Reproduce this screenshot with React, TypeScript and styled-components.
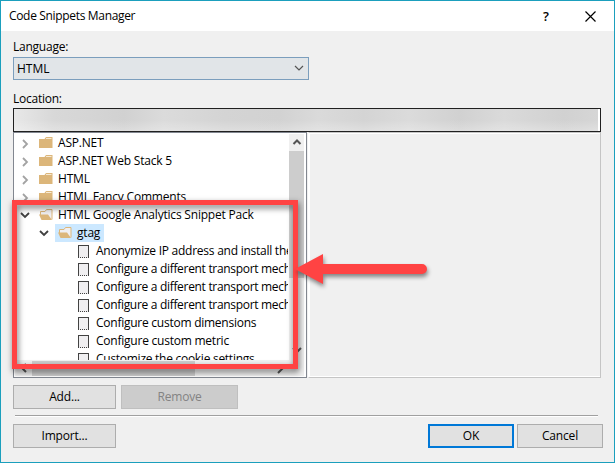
import React from 'react';
import styled, { createGlobalStyle } from 'styled-components';

const Global = createGlobalStyle`
  * { box-sizing: border-box; }
  body { margin: 0; overflow: hidden; }
`;

const Dialog = styled.main`
  position: relative;
  width: 615px;
  height: 463px;
  border: 1px solid #1b9fbd;
  background: #f0f0f0;
  color: #000;
  font: 12px/18px 'Open Sans', 'Noto Sans', sans-serif;
  letter-spacing: -0.2px;
  white-space: nowrap;
`;

const TitleBar = styled.header`
  display: flex;
  align-items: center;
  height: 30px;
  padding: 0 18px 0 8px;
  background: #fff;
`;

const Title = styled.h1`
  flex: 1;
  margin: 0;
  font: inherit;
  letter-spacing: -0.33px;
`;

const HelpMark = styled.span`
  width: 8px;
  margin-right: 34px;
  font-size: 13px;
  font-weight: 600;
`;

const Body = styled.div`
  padding: 7px 13px 0 12px;
`;

const Label = styled.label`
  display: block;
  height: 19px;
  line-height: 18px;
  letter-spacing: -0.24px;
`;

const LocationLabel = styled(Label)`
  line-height: 20px;
`;

const Select = styled.div`
  display: flex;
  align-items: center;
  justify-content: space-between;
  width: 296px;
  height: 23px;
  margin-bottom: 9px;
  padding: 0 4px 0 3px;
  border: 1px solid #7b9ebd;
  background: #e1e5e8;
  letter-spacing: 0;
`;

const LocationField = styled.div`
  width: 588px;
  height: 24px;
  border: 1px solid #202020;
  background:
    linear-gradient(180deg, transparent 50%, rgba(255, 255, 255, 0.25)),
    linear-gradient(90deg, #e8e8e8 0, #d8d8d8 40px, #d5d5d5 75px, #d1d1d1 110px, #dbdbdb 150px, #d4d4d4 210px, #d2d2d2 265px, #dadada 305px, #d4d4d4 350px, #dbdbdb 395px, #d1d1d1 445px, #dadada 490px, #d1d1d1 550px, #d6d6d6 584px, #fff 584px);
`;

const Panels = styled.div`
  display: flex;
  width: 588px;
  height: 246px;
`;

const TreePanel = styled.section`
  display: grid;
  grid-template: 226px 16px / 273px 1px 15px;
  width: 294px;
  padding: 1px 1px;
  border: 1px solid #828790;
  background: #fff;
`;

const Preview = styled.section`
  flex: 1;
  margin-left: 1px;
  border: 1px solid #c5c5c5;
  border-left-color: #fff;
  box-shadow: inset 0 1px #fff, inset 1px 0 #fff, inset 0 -1px #fff;
`;

const Tree = styled.div`
  overflow: hidden;
`;

const Row = styled.div<{ $indent: number }>`
  display: flex;
  align-items: center;
  height: 18px;
  padding-left: ${p => p.$indent}px;
`;

const Toggle = styled.span`
  display: flex;
  width: 16px;
  height: 18px;
  align-items: center;
`;

const Item = styled.span<{ $selected?: boolean }>`
  display: flex;
  align-items: center;
  height: 18px;
  padding-right: 4px;
  background: ${p => (p.$selected ? '#cce8ff' : 'transparent')};
`;

const Caption = styled.span<{ $spacing: number }>`
  letter-spacing: ${p => p.$spacing}px;
`;

const FolderSvg = styled.svg`
  width: 14px;
  height: 14px;
  margin: 0 5px 0 3px;
`;

const SnippetBox = styled.span`
  flex: none;
  width: 11px;
  height: 13px;
  margin-right: 7px;
  border: 1px solid #424242;
  border-bottom-style: dotted;
  background: #f0eff1;
`;

const VScroll = styled.div`
  display: flex;
  flex-direction: column;
  grid-column: 3;
  align-items: center;
  height: 226px;
  background: #f0f0f0;
`;

const VThumb = styled.div`
  width: 15px;
  height: 127px;
  margin-bottom: 64px;
  background: #cdcdcd;
`;

const HScroll = styled.div`
  display: flex;
  grid-column: 1 / -1;
  align-items: center;
  background: #f0f0f0;
`;

const HThumb = styled.div`
  width: 163px;
  height: 15px;
  margin-right: 76px;
  background: #cdcdcd;
`;

const ScrollStep = styled.span`
  display: flex;
  flex: none;
  width: 17px;
  height: 17px;
  align-items: center;
  justify-content: center;
`;

const Buttons = styled.div`
  display: flex;
  gap: 5px;
  padding-top: 7px;
`;

const Button = styled.button<{ $width: number; $primary?: boolean }>`
  width: ${p => p.$width}px;
  height: 24px;
  padding: 0 0 1px;
  border: ${p => (p.$primary ? '2px solid #0078d7' : '1px solid #adadad')};
  background: #e1e1e1;
  color: #000;
  font: inherit;
  letter-spacing: -0.18px;
  line-height: 18px;
  &:disabled { border-color: #bfbfbf; background: #ccc; color: #838383; }
`;

const Divider = styled.div`
  width: 583px;
  height: 2px;
  margin: 6px 0 0 2px;
  border-top: 1px solid #a0a0a0;
  border-bottom: 1px solid #fff;
`;

const Footer = styled.div`
  display: flex;
  width: 590px;
  gap: 3px;
  padding-top: 7px;
`;

const Spacer = styled.span`
  flex: 1;
`;

const Highlight = styled.div`
  position: absolute;
  left: 11px;
  top: 199px;
  width: 286px;
  height: 169px;
  border: 5px solid #ff4343;
  filter: drop-shadow(1px 3px 3px rgba(0, 0, 0, 0.55));
`;

const Pointer = styled.svg`
  position: absolute;
  left: 289px;
  top: 244px;
  filter: drop-shadow(1px 3px 2px rgba(0, 0, 0, 0.45));
`;

const angles = {
  right: 'M3 2 L7 6 L3 10',
  down: 'M1 3 L5 7 L9 3',
  up: 'M1.5 7 L5 3.5 L8.5 7',
  left: 'M7 1 L3 5 L7 9',
};

function Chevron({ dir, color = '#555', weight = 2 }: { dir: keyof typeof angles; color?: string; weight?: number }) {
  return (
    <svg width="10" height="11" viewBox="0 0 10 11" fill="none" stroke={color} strokeWidth={weight}>
      <path d={angles[dir]} />
    </svg>
  );
}

function Folder({ open }: { open?: boolean }) {
  return (
    <FolderSvg viewBox="0 0 14 14">
      {open ? (
        <>
          <path d="M1.5 7V3.5H6L7.5 1.5H13V11.5H11Z" fill="#f0eff1" />
          <path d="M1.5 7V3.5H6L7.5 1.5H13V11.5" fill="none" stroke="#dcb67a" />
          <path d="M0 6.5H9L13 12H2.5Z" fill="#dcb67a" />
        </>
      ) : (
        <>
          <path d="M0 3H5.5L7 1H13.5V12H0Z" fill="#dcb67a" />
          <path d="M7 2.5H12.5" stroke="#f7ead4" />
        </>
      )}
    </FolderSvg>
  );
}

const folders: { name: string; open?: boolean; nested?: boolean }[] = [
  { name: 'ASP.NET' },
  { name: 'ASP.NET Web Stack 5' },
  { name: 'HTML' },
  { name: 'HTML Fancy Comments' },
  { name: 'HTML Google Analytics Snippet Pack', open: true },
  { name: 'gtag', open: true, nested: true },
];

const snippets = [
  { name: 'Anonymize IP address and install the', spacing: -0.25 },
  { name: 'Configure a different transport mech', spacing: -0.31 },
  { name: 'Configure a different transport mech', spacing: -0.31 },
  { name: 'Configure a different transport mech', spacing: -0.31 },
  { name: 'Configure custom dimensions', spacing: -0.25 },
  { name: 'Configure custom metric', spacing: -0.23 },
  { name: 'Customize the cookie settings', spacing: -0.27 },
];

export default function App() {
  return (
    <>
      <Global />
      <Dialog>
        <TitleBar>
          <Title>Code Snippets Manager</Title>
          <HelpMark>?</HelpMark>
          <svg width="11" height="11" viewBox="0 0 11 11" stroke="#000" strokeWidth="1.2">
            <path d="M.5 .5L10.5 10.5M10.5 .5L.5 10.5" />
          </svg>
        </TitleBar>
        <Body>
          <Label>Language:</Label>
          <Select>HTML<Chevron dir="down" weight={1.2} /></Select>
          <LocationLabel>Location:</LocationLabel>
          <LocationField />
          <Panels>
            <TreePanel>
              <Tree>
                {folders.map(f => (
                  <Row key={f.name} $indent={f.nested ? 24 : 5}>
                    <Toggle>
                      <Chevron dir={f.open ? 'down' : 'right'} color={f.open ? '#404040' : '#a3a3a3'} weight={1.8} />
                    </Toggle>
                    <Item $selected={f.nested}>
                      <Folder open={f.open} />
                      <Caption $spacing={-0.2}>{f.name}</Caption>
                    </Item>
                  </Row>
                ))}
                {snippets.map((s, i) => (
                  <Row key={i} $indent={63}>
                    <SnippetBox />
                    <Caption $spacing={s.spacing}>{s.name}</Caption>
                  </Row>
                ))}
              </Tree>
              <VScroll>
                <ScrollStep><Chevron dir="up" /></ScrollStep>
                <VThumb />
                <ScrollStep><Chevron dir="down" /></ScrollStep>
              </VScroll>
              <HScroll>
                <ScrollStep><Chevron dir="left" /></ScrollStep>
                <HThumb />
                <ScrollStep><Chevron dir="right" /></ScrollStep>
              </HScroll>
            </TreePanel>
            <Preview />
          </Panels>
          <Buttons>
            <Button $width={103}>Add...</Button>
            <Button $width={117} disabled>Remove</Button>
          </Buttons>
          <Divider />
          <Footer>
            <Button $width={103}>Import...</Button>
            <Spacer />
            <Button $width={86} $primary>OK</Button>
            <Button $width={86}>Cancel</Button>
          </Footer>
        </Body>
        <Highlight />
        <Pointer width="145" height="50" viewBox="0 0 145 50" fill="#ff4343">
          <path d="M5 24L33 9V19H132A5 5 0 0 1 132 29H33V39Z" />
        </Pointer>
      </Dialog>
    </>
  );
}
